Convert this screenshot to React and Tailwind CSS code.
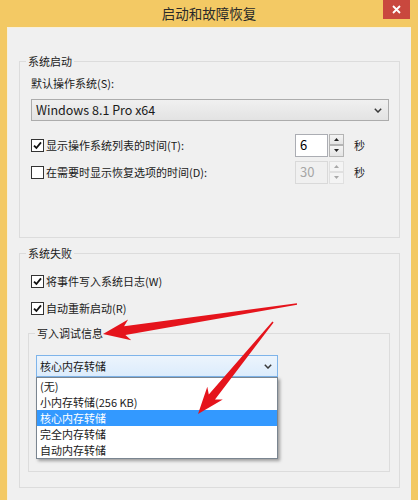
import React from 'react';

// tapered red arrow shape: thin tail, wider neck, swept-back head
const arrowPoints = (tx, ty, hx, hy, headLen = 24, headW = 20, neckW = 7, tailW = 1) => {
    const dx = hx - tx;
    const dy = hy - ty;
    const len = Math.hypot(dx, dy);
    const ux = dx / len;
    const uy = dy / len;
    const nx = -uy;
    const ny = ux;
    const bx = hx - ux * headLen;
    const by = hy - uy * headLen;
    const wx = bx - ux * 5;
    const wy = by - uy * 5;
    const p = (x, y, w) => `${(x + nx * w).toFixed(1)},${(y + ny * w).toFixed(1)}`;
    return [
        p(tx, ty, tailW / 2),
        p(bx, by, neckW / 2),
        p(wx, wy, headW / 2),
        `${hx},${hy}`,
        p(wx, wy, -headW / 2),
        p(bx, by, -neckW / 2),
        p(tx, ty, -tailW / 2),
    ].join(' ');
};

const Chevron = () => (
    <svg width="8" height="5" viewBox="0 0 8 5">
        <path d="M0.8 0.8 L4 4 L7.2 0.8" fill="none" stroke="#3a3a3a" strokeWidth="1.5" />
    </svg>
);

const CheckBox = ({ checked, label }) => (
    <div className="flex items-center h-[16px]">
        <span className="w-[13px] h-[13px] border border-[#333333] bg-white flex items-center justify-center">
            {checked && (
                <svg width="9" height="9" viewBox="0 0 9 9">
                    <path d="M1 4.6 L3.4 7 L8 1.4" fill="none" stroke="#111" strokeWidth="1.8" />
                </svg>
            )}
        </span>
        <span className="ml-[2px]">{label}</span>
    </div>
);

const SpinButton = ({ up, disabled }) => (
    <div
        className={`flex-1 flex items-center justify-center border ${
            disabled ? 'border-[#e0e0e0] bg-[#f4f4f4]' : 'border-[#b4b4b4] bg-gradient-to-b from-[#f4f4f4] to-[#e4e4e4]'
        }`}
    >
        <svg width="5" height="3" viewBox="0 0 5 3">
            <path d={up ? 'M0 3 L2.5 0 L5 3 Z' : 'M0 0 L2.5 3 L5 0 Z'} fill={disabled ? '#a8a8a8' : '#222'} />
        </svg>
    </div>
);

const Spinner = ({ value, disabled }) => (
    <div className="flex h-[23px] w-[49px]">
        <div
            className={`flex-1 border pl-[4px] text-[13px] leading-[20px] ${
                disabled ? 'border-[#d9d9d9] bg-[#f0f0f0] text-[#a6a6a6]' : 'border-[#abadb3] bg-white text-black'
            }`}
        >
            {value}
        </div>
        <div className="flex flex-col w-[15px] ml-[1px]">
            <SpinButton up disabled={disabled} />
            <SpinButton disabled={disabled} />
        </div>
    </div>
);

const Group = ({ title, className, children }) => (
    <div className={`relative border border-[#dcdcdc] ${className}`}>
        <span className="absolute left-[6px] top-[-9px] bg-[#f0f0f0] px-[2px] leading-[16px]">{title}</span>
        {children}
    </div>
);

const dumpOptions = ['(无)', '小内存转储(256 KB)', '核心内存转储', '完全内存转储', '自动内存转储'];

export default function App() {
    return (
        <div className="relative w-[418px] h-[500px] overflow-hidden bg-[#f3c964] text-[11px] text-[#1a1a1a] font-['Noto_Sans_CJK_SC',sans-serif]">
            {/* title bar */}
            <div className="relative h-[27px] flex items-center justify-center">
                <span className="text-[13.5px] text-[#2a2a2a] leading-none">启动和故障恢复</span>
                <div className="absolute right-[8px] top-0 w-[27px] h-[19px] bg-[#c9483e] flex items-center justify-center">
                    <svg width="9" height="9" viewBox="0 0 9 9">
                        <path d="M1 1 L8 8 M8 1 L1 8" stroke="#fff" strokeWidth="1.8" />
                    </svg>
                </div>
            </div>

            {/* client area */}
            <div className="mx-[7px] h-[480px] bg-[#f0f0f0] border-t border-l border-[#f7f0dc] px-[11px] pt-[33px]">
                <Group title="系统启动" className="pt-[13px] pb-[54px] pl-[11px] pr-[10px]">
                    <div className="leading-[16px]">默认操作系统(S):</div>
                    <div className="mt-[8px] h-[22px] border border-[#acacac] bg-gradient-to-b from-[#f0f0f0] to-[#e3e3e3] flex items-center justify-between pl-[4px] pr-[6px]">
                        <span className="text-[12.5px] text-[#1a1a1a]">Windows 8.1 Pro x64</span>
                        <Chevron />
                    </div>
                    <div className="mt-[13px] flex items-center h-[22px]">
                        <div className="w-[264px]">
                            <CheckBox checked label="显示操作系统列表的时间(T):" />
                        </div>
                        <Spinner value="6" />
                        <span className="ml-[10px]">秒</span>
                    </div>
                    <div className="mt-[5px] flex items-center h-[22px]">
                        <div className="w-[264px]">
                            <CheckBox label="在需要时显示恢复选项的时间(D):" />
                        </div>
                        <Spinner value="30" disabled />
                        <span className="ml-[10px]">秒</span>
                    </div>
                </Group>

                <Group title="系统失败" className="mt-[15px] pt-[19px] pb-[15px] pl-[11px] pr-[9px]">
                    <CheckBox checked label="将事件写入系统日志(W)" />
                    <div className="mt-[11px]">
                        <CheckBox checked label="自动重新启动(R)" />
                    </div>
                    <Group title="写入调试信息" className="mt-[17px] -ml-[3px] pt-[21px] pb-[94px] pl-[7px] pr-[4px]">
                        <div className="relative w-[242px]">
                            <div className="h-[22px] border border-[#7eb4ea] bg-gradient-to-b from-[#ecf4fc] to-[#dcecfc] flex items-center justify-between pl-[3px] pr-[5px]">
                                <span>核心内存转储</span>
                                <Chevron />
                            </div>
                            {/* open dropdown list */}
                            <div className="absolute left-0 top-[22px] w-[242px] border border-[#7a8590] bg-white shadow-[2px_2px_3px_rgba(0,0,0,0.35)]">
                                {dumpOptions.map((opt) => (
                                    <div
                                        key={opt}
                                        className={`h-[16px] leading-[16px] pl-[3px] ${
                                            opt === '核心内存转储' ? 'bg-[#3399ff] text-white' : ''
                                        }`}
                                    >
                                        {opt}
                                    </div>
                                ))}
                            </div>
                        </div>
                    </Group>
                </Group>
            </div>

            {/* red annotation arrows */}
            <svg className="pointer-events-none absolute inset-0" width="418" height="500" viewBox="0 0 418 500">
                <polygon points={arrowPoints(297, 304, 103, 334, 22, 21, 9, 1.5)} fill="#e5141c" />
                <polygon points={arrowPoints(273, 322, 198, 414, 22, 20, 8, 1.5)} fill="#e5141c" />
            </svg>
        </div>
    );
}
